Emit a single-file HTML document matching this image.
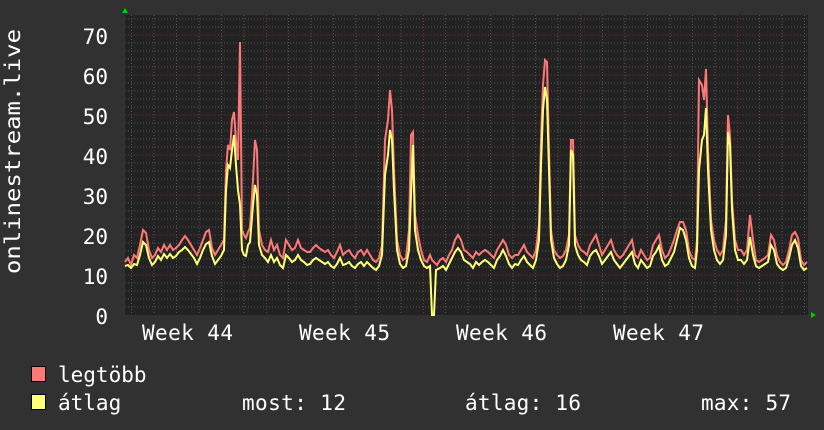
<!DOCTYPE html>
<html><head><meta charset="utf-8"><style>
html,body{margin:0;padding:0;background:#313131;}
svg{display:block}
text{font-family:"DejaVu Sans Mono","Liberation Mono",monospace;fill:#fff;font-size:21px}
</style></head><body>
<svg width="824" height="430" viewBox="0 0 824 430" xmlns="http://www.w3.org/2000/svg">
<rect x="0" y="0" width="824" height="430" fill="#313131"/>
<rect x="125" y="15" width="683" height="300" fill="#222222"/>
<g stroke="#555" stroke-width="1" stroke-dasharray="1,2">
<path d="M125 307H808M125 299H808M125 291H808M125 283H808M125 267H808M125 259H808M125 251H808M125 243H808M125 227H808M125 219H808M125 211H808M125 203H808M125 187H808M125 179H808M125 171H808M125 163H808M125 147H808M125 139H808M125 131H808M125 123H808M125 107H808M125 99H808M125 91H808M125 83H808M125 67H808M125 59H808M125 51H808M125 43H808M125 27H808M125 19H808"/>
<path d="M131.5 15V315M154 15V315M176.5 15V315M199 15V315M221.5 15V315M244 15V315M288.5 15V315M311 15V315M333.5 15V315M356 15V315M378.5 15V315M401 15V315M445.5 15V315M468 15V315M490.5 15V315M513 15V315M535.5 15V315M558 15V315M602.5 15V315M625 15V315M647.5 15V315M670 15V315M692.5 15V315M715 15V315M759.5 15V315M782 15V315M804.5 15V315"/>
</g>
<g stroke="#7a3030" stroke-width="1" stroke-dasharray="1,2">
<path d="M125 275H808M125 235H808M125 195H808M125 155H808M125 115H808M125 75H808M125 35H808"/>
<path d="M266.5 15V315M423.5 15V315M580.5 15V315M737.5 15V315"/>
</g>
<polyline fill="none" stroke="#ff7878" stroke-width="2" points="125,262 128,258 131,265 134,255 137,258 140,245 143,230 146,233 149,250 152,258 155,255 158,248 161,252 164,245 167,250 170,245 173,250 176,248 179,245 182,240 185,236 188,240 191,245 194,250 197,255 200,248 203,240 206,232 209,230 212,248 215,255 218,250 221,245 224,240 226,170 228,145 230,150 232,120 234,112 236,140 238,160 240,42 242,230 244,235 246,238 248,232 250,228 253,180 255,140 257,150 259,230 262,245 265,250 268,252 271,240 274,250 277,245 280,255 283,258 286,240 289,245 292,250 295,248 298,240 301,248 304,250 307,252 310,252 313,248 316,245 319,248 322,250 325,252 328,250 331,255 334,258 337,252 340,245 343,255 346,252 349,250 352,255 355,258 358,252 361,250 364,255 367,250 370,255 373,260 376,262 379,258 382,245 385,140 388,120 390,90 392,110 394,170 397,240 400,255 403,260 406,258 409,230 411,135 413,132 415,215 418,235 421,250 424,260 427,262 430,255 432,260 434,262 437,265 440,260 443,258 446,262 449,255 452,250 455,240 458,235 461,240 464,250 467,252 470,255 473,258 476,252 479,255 482,252 485,250 488,252 491,255 494,258 497,250 500,245 503,240 506,245 509,255 512,258 515,255 518,255 521,250 524,245 527,252 530,255 533,258 536,250 539,225 541,140 543,85 545,60 547,62 549,150 551,230 554,250 557,255 560,258 563,256 566,250 569,235 571,140 573,140 575,235 578,245 581,250 584,252 587,255 590,245 593,240 596,235 599,245 602,255 605,250 608,245 611,240 614,250 617,255 620,258 623,255 626,250 629,245 632,240 635,255 638,258 641,250 644,255 647,260 650,258 653,245 656,240 659,235 662,250 665,258 668,255 671,248 674,240 677,230 680,222 683,222 686,230 689,250 692,258 695,260 697,240 699,80 702,85 704,100 706,69 708,150 711,220 714,240 717,250 720,255 723,250 726,220 728,115 730,135 732,200 735,240 738,250 741,250 744,255 747,250 750,215 753,240 756,260 759,262 762,260 765,258 768,255 771,235 774,240 777,255 780,262 783,265 786,262 789,250 792,235 795,232 798,238 801,260 804,265 807,262"/>
<polyline fill="none" stroke="#ffff78" stroke-width="2" points="125,266 128,265 131,268 134,264 137,265 140,255 143,242 146,245 149,258 152,265 155,262 158,256 161,260 164,254 167,258 170,254 173,258 176,256 179,252 182,250 185,247 188,250 191,254 194,258 197,264 200,258 203,250 206,244 209,242 212,256 215,264 218,260 221,256 224,250 226,190 228,165 230,168 232,150 234,135 236,165 238,190 240,205 242,250 244,255 246,256 248,245 250,242 253,205 255,185 257,195 259,245 262,255 265,258 268,262 271,255 274,262 277,258 280,265 283,268 286,255 289,258 292,262 295,260 298,255 301,260 304,262 307,265 310,264 313,260 316,258 319,260 322,262 325,264 328,262 331,266 334,268 337,264 340,258 343,265 346,264 349,262 352,266 355,268 358,264 361,262 364,266 367,262 370,265 373,268 376,270 379,266 382,255 385,175 388,155 390,130 392,140 394,190 397,250 400,264 403,268 406,266 409,250 411,195 413,145 415,230 418,250 421,260 424,266 427,268 430,266 432,315 434,315 436,270 440,268 443,266 446,270 449,264 452,258 455,252 458,248 461,252 464,260 467,262 470,264 473,268 476,262 479,265 482,262 485,260 488,262 491,265 494,268 497,260 500,256 503,250 506,256 509,264 512,268 515,264 518,265 521,260 524,256 527,262 530,265 533,268 536,260 539,240 541,165 543,110 545,87 547,100 549,170 551,240 554,258 557,264 560,268 563,266 566,260 569,245 571,150 573,155 575,245 578,255 581,260 584,262 587,265 590,256 593,252 596,250 599,256 602,264 605,260 608,256 611,252 614,260 617,264 620,268 623,264 626,260 629,256 632,252 635,264 638,268 641,260 644,264 647,268 650,266 653,256 656,252 659,246 662,260 665,266 668,264 671,258 674,252 677,240 680,228 683,230 686,240 689,258 692,266 695,268 697,250 699,170 702,140 704,135 706,108 708,170 711,230 714,250 717,260 720,264 723,260 726,235 728,132 730,145 732,210 735,250 738,260 741,260 744,264 747,260 750,237 753,255 756,266 759,268 762,266 765,264 768,262 771,245 774,250 777,264 780,268 783,270 786,268 789,258 792,245 795,240 798,248 801,266 804,270 807,268"/>
<path d="M122 13L125 8L128 13Z" fill="#00d000"/>
<path d="M811 312L816 315L811 318Z" fill="#00d000"/>
<g text-anchor="end">
<text x="108" y="44">70</text><text x="108" y="84">60</text><text x="108" y="124">50</text><text x="108" y="164">40</text><text x="108" y="204">30</text><text x="108" y="244">20</text><text x="108" y="284">10</text><text x="108" y="324">0</text>
</g>
<text x="142" y="340" textLength="91">Week 44</text><text x="299" y="340" textLength="91">Week 45</text><text x="456" y="340" textLength="91">Week 46</text><text x="613" y="340" textLength="91">Week 47</text>
<text transform="translate(20,274) rotate(-90)" textLength="245" lengthAdjust="spacingAndGlyphs">onlinestream.live</text>
<rect x="31.5" y="366.5" width="14" height="15" fill="#ff7878" stroke="#000"/>
<rect x="31.5" y="394.5" width="14" height="15" fill="#ffff78" stroke="#000"/>
<text x="58" y="382">legtöbb</text>
<text x="58" y="410">átlag</text>
<text x="242" y="410" textLength="104">most: 12</text>
<text x="465" y="410" textLength="116">átlag: 16</text>
<text x="701" y="410" textLength="90">max: 57</text>
</svg>
</body></html>
